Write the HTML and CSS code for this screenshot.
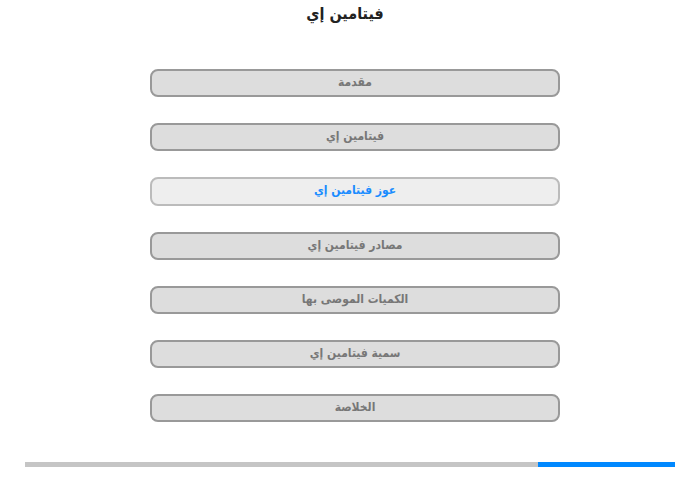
FILE: index.html
```html
<!DOCTYPE html>
<html lang="ar" dir="rtl">
<head>
<meta charset="utf-8">
<link rel="stylesheet" href="styles.css">
</head>
<body>
<div class="page">
  <h1 class="title">فيتامين إي</h1>
  <nav class="menu">
    <div class="item">مقدمة</div>
    <div class="item">فيتامين إي</div>
    <div class="item active">عوز فيتامين إي</div>
    <div class="item">مصادر فيتامين إي</div>
    <div class="item">الكميات الموصى بها</div>
    <div class="item">سمية فيتامين إي</div>
    <div class="item">الخلاصة</div>
  </nav>
  <div class="progress" dir="ltr">
    <div class="track"></div>
    <div class="fill"></div>
  </div>
</div>
</body>
</html>
```

FILE: styles.css
```css
html, body {
  margin: 0;
  padding: 0;
  background: #fff;
}
body {
  width: 700px;
  height: 480px;
  font-family: "DejaVu Sans Condensed", "DejaVu Sans", sans-serif;
}
.page {
  display: flex;
  flex-direction: column;
  align-items: center;
}
.title {
  margin: 3px 10px 0 0;
  font-size: 16px;
  font-weight: bold;
  color: #222;
  line-height: 22px;
  height: 22px;
}
.menu {
  margin-top: 44px;
  display: flex;
  flex-direction: column;
  gap: 26px;
  width: 410px;
  margin-left: 10px;
}
.item {
  box-sizing: border-box;
  height: 28.2px;
  border: 2px solid #999;
  border-radius: 8px;
  background: #ddd;
  color: #777;
  font-size: 12px;
  font-weight: bold;
  text-align: center;
  line-height: 23px;
}
.item.active {
  background: #eee;
  border-color: #bbb;
  color: #1a8cff;
}
.progress {
  margin-top: 40px;
  width: 650px;
  height: 5px;
  display: flex;
}
.track {
  flex: 0 0 513px;
  background: #c5c5c5;
}
.fill {
  flex: 1;
  background: #0088ff;
}
```
